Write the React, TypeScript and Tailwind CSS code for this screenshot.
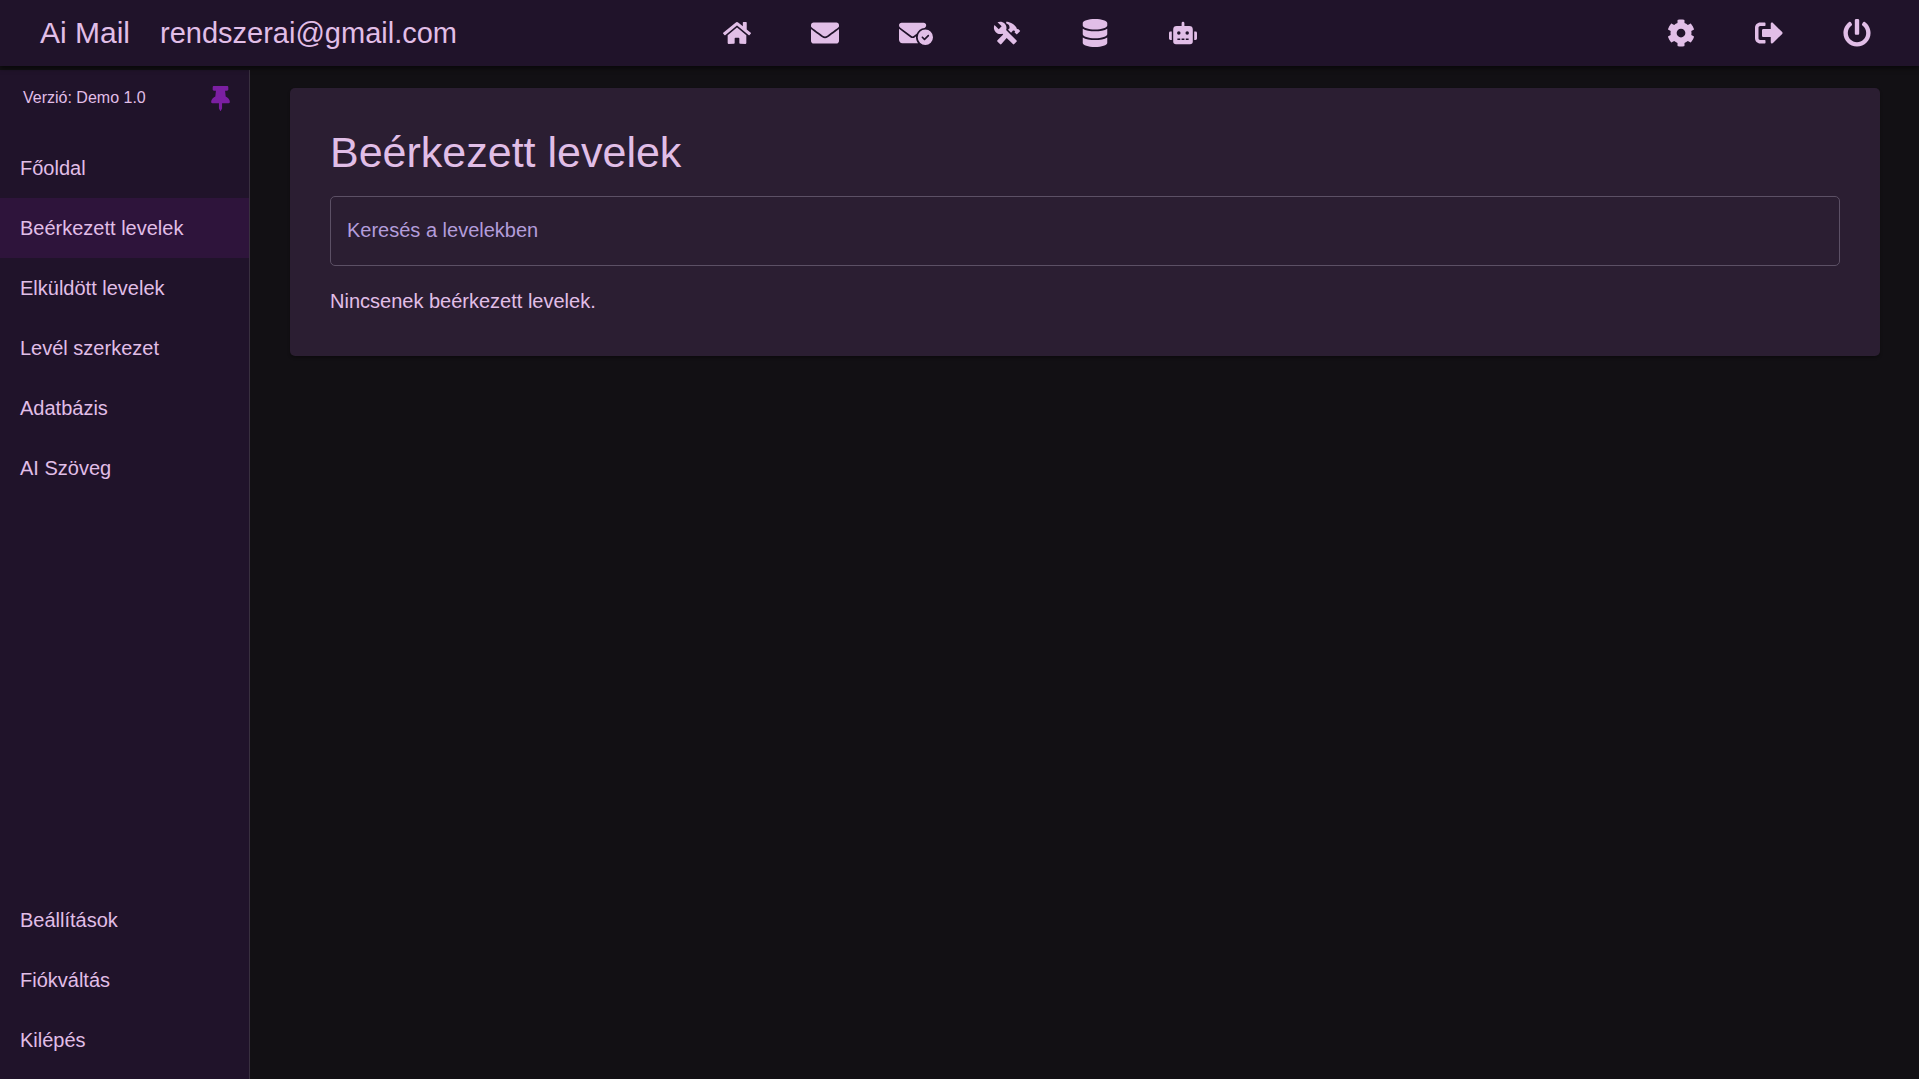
import { FaCog, FaDatabase, FaEnvelope, FaHome, FaPowerOff, FaRobot, FaSignOutAlt, FaThumbtack } from 'react-icons/fa';
import { FaEnvelopeCircleCheck } from 'react-icons/fa6';
import { IoMdConstruct } from 'react-icons/io';
import type { IconType } from 'react-icons';

type NavIcon = { label: string; icon: IconType; wide?: boolean };

const mainIcons: NavIcon[] = [
  { label: 'Főoldal', icon: FaHome },
  { label: 'Beérkezett levelek', icon: FaEnvelope },
  { label: 'Elküldött levelek', icon: FaEnvelopeCircleCheck, wide: true },
  { label: 'Levél szerkezet', icon: IoMdConstruct },
  { label: 'Adatbázis', icon: FaDatabase },
  { label: 'AI Szöveg', icon: FaRobot },
];

const accountIcons: NavIcon[] = [
  { label: 'Beállítások', icon: FaCog },
  { label: 'Fiókváltás', icon: FaSignOutAlt },
  { label: 'Kilépés', icon: FaPowerOff },
];

const mainLinks = ['Főoldal', 'Beérkezett levelek', 'Elküldött levelek', 'Levél szerkezet', 'Adatbázis', 'AI Szöveg'];
const accountLinks = ['Beállítások', 'Fiókváltás', 'Kilépés'];

function IconButtons({ items }: { items: NavIcon[] }) {
  return (
    <>
      {items.map(({ label, icon: Icon, wide }) => (
        <button key={label} type="button" aria-label={label} className="cursor-pointer">
          <Icon className={wide ? 'h-7 w-[34px]' : 'size-7'} />
        </button>
      ))}
    </>
  );
}

function SideLinks({ items, active }: { items: string[]; active?: string }) {
  return (
    <ul>
      {items.map((item) => (
        <li key={item}>
          <a
            href="#"
            aria-current={item === active ? 'page' : undefined}
            className={`flex h-[60px] items-center px-5 text-[20px] leading-[30px] ${item === active ? 'bg-[#2e143b]' : ''}`}
          >
            {item}
          </a>
        </li>
      ))}
    </ul>
  );
}

export default function App() {
  return (
    <div className="flex min-h-screen flex-col bg-[#121014] font-['Liberation_Sans',Arial,sans-serif] text-[#e1bee7]">
      <header className="z-10 grid h-[66px] grid-cols-[1fr_auto_1fr] items-center bg-[#20132a] pr-12 pl-10 shadow-[0_2px_5px_rgba(0,0,0,0.6)]">
        <div className="flex items-center gap-[30px]">
          <span className="text-[30px] leading-9">Ai Mail</span>
          <span className="text-[29px] leading-9">rendszerai@gmail.com</span>
        </div>
        <nav aria-label="Gyorselérés" className="flex items-center gap-[60px] pl-2">
          <IconButtons items={mainIcons} />
        </nav>
        <div className="flex items-center justify-end gap-[60px]">
          <IconButtons items={accountIcons} />
        </div>
      </header>

      <div className="flex flex-1 pt-1">
        <aside className="flex w-[250px] shrink-0 flex-col border-r border-[#39303f] bg-[#20132a] pb-[9px]">
          <div className="flex h-[68px] items-center justify-between pr-4 pb-3 pl-[23px]">
            <span className="text-[16px] leading-[30px]">Verzió: Demo 1.0</span>
            <button type="button" aria-label="Menü rögzítése" className="cursor-pointer text-[#7b1fa2]">
              <FaThumbtack className="size-[25px]" />
            </button>
          </div>
          <nav aria-label="Oldalmenü" className="flex flex-1 flex-col justify-between">
            <SideLinks items={mainLinks} active="Beérkezett levelek" />
            <SideLinks items={accountLinks} />
          </nav>
        </aside>

        <main className="flex-1 px-10 pt-[18px] pr-[39px]">
          <section className="rounded-[5px] bg-[#2b1e32] p-10 shadow-[0_2px_3px_rgba(0,0,0,0.3)]">
            <h1 className="mb-5 text-[43px] leading-[48px]">Beérkezett levelek</h1>
            <input
              type="text"
              aria-label="Keresés a levelekben"
              placeholder="Keresés a levelekben"
              className="mb-5 block h-[70px] w-full rounded-[5px] border border-[#5c5065] bg-transparent px-4 pb-0.5 text-[20px] outline-none placeholder:text-[#b39ddb]"
            />
            <p className="text-[20px] leading-[30px]">Nincsenek beérkezett levelek.</p>
          </section>
        </main>
      </div>
    </div>
  );
}
